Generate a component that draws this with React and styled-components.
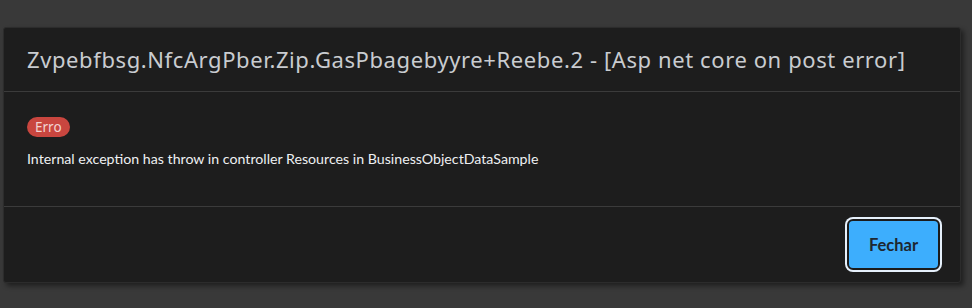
import React from "react";
import styled, { createGlobalStyle } from "styled-components";

const Global = createGlobalStyle`
  html, body { margin: 0; padding: 0; background: #393939; }
  body { font-family: "Lato", "Noto Sans", sans-serif; }
`;

const Page = styled.div`
  padding: 27px 11px 0 3px;
  height: 308px;
  box-sizing: border-box;
`;

const Modal = styled.div`
  background: #1d1d1d;
  border: 1px solid #2c2c2c;
  border-radius: 3px;
  box-shadow: 3px 3px 5px rgba(0, 0, 0, 0.45);
  height: 256px;
  box-sizing: border-box;
  display: flex;
  flex-direction: column;
`;

const Header = styled.div`
  height: 64px;
  box-sizing: border-box;
  border-bottom: 1px solid #3b3b3b;
  display: flex;
  align-items: center;
  padding: 0 23px 2px;
`;

const Title = styled.h5`
  margin: 0;
  font-family: "Noto Sans", sans-serif;
  font-weight: 400;
  font-size: 22px;
  letter-spacing: 0.6px;
  color: #c9ccd0;
  white-space: nowrap;
`;

const Body = styled.div`
  height: 115px;
  box-sizing: border-box;
  border-bottom: 1px solid #3b3b3b;
  padding: 25px 23px 0;
  display: flex;
  flex-direction: column;
  align-items: flex-start;
  gap: 13px;
`;

const Badge = styled.span`
  background: #c9463f;
  color: #f2d4d2;
  font-family: "Noto Sans", sans-serif;
  font-size: 13.5px;
  line-height: 20px;
  height: 20px;
  padding: 0 8px;
  border-radius: 10px;
`;

const Message = styled.p`
  margin: 0;
  font-family: "Lato", sans-serif;
  font-size: 14.2px;
  color: #eef0f2;
`;

const Footer = styled.div`
  flex: 1;
  display: flex;
  align-items: center;
  justify-content: flex-end;
  padding: 0 20px;
`;

const Button = styled.button`
  width: 93px;
  height: 51px;
  box-sizing: border-box;
  background: #3daefd;
  border: 2px solid #1b1b1b;
  border-radius: 6px;
  box-shadow: 0 0 0 2px #e6f0fb;
  color: #1e2730;
  font-family: "Lato", sans-serif;
  font-weight: 700;
  font-size: 16.5px;
  cursor: pointer;
`;

export default function App() {
  return (
    <>
      <Global />
      <Page>
        <Modal>
          <Header>
            <Title>Zvpebfbsg.NfcArgPber.Zip.GasPbagebyyre+Reebe.2 - [Asp net core on post error]</Title>
          </Header>
          <Body>
            <Badge>Erro</Badge>
            <Message>Internal exception has throw in controller Resources in BusinessObjectDataSample</Message>
          </Body>
          <Footer>
            <Button>Fechar</Button>
          </Footer>
        </Modal>
      </Page>
    </>
  );
}
